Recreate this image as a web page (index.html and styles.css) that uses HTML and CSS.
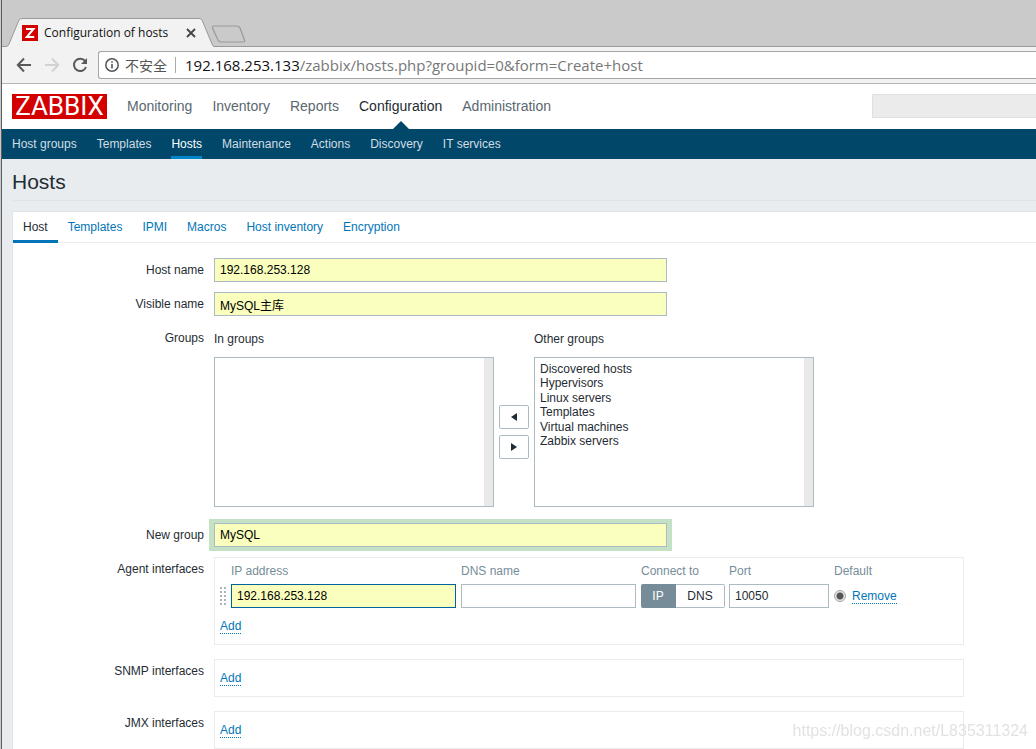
FILE: index.html
```html
<!DOCTYPE html>
<html lang="en">
<head>
<meta charset="utf-8">
<title>Configuration of hosts</title>
<link rel="stylesheet" href="styles.css">
</head>
<body>
<div class="window">
  <div class="tabstrip">
    <div class="tab">
      <svg class="tab-shape" viewBox="0 0 212 29" width="212" height="29" aria-hidden="true"><path d="M0 28.5 H4 Q6 28.5 7 26 L17 2 Q18 .5 20 .5 H197 Q199 .5 200 2 L210 26 Q211 28.5 212 28.5 V29 H0Z" fill="#f2f2f2"/><path d="M0 28.5 H4 Q6 28.5 7 26 L17 2 Q18 .5 20 .5 H197 Q199 .5 200 2 L210 26 Q211 28.5 212 28.5" fill="none" stroke="#999"/></svg>
      <span class="favicon"><svg viewBox="0 0 16 16" width="16" height="16" aria-hidden="true"><path d="M4 4h7.500L4.800 12H12.200" fill="none" stroke="#fff" stroke-width="2"/></svg></span>
      <span class="tab-title">Configuration of hosts</span>
      <button class="tab-close" aria-label="Close tab"><svg viewBox="0 0 10 10" width="10" height="10"><path d="M1 1l8 8M9 1L1 9" stroke="#444" stroke-width="1.8"/></svg></button>
    </div>
    <button class="new-tab" aria-label="New tab"><svg viewBox="0 0 36 18" width="36" height="18"><path d="M3 1H26Q28 1 29 3L33.500 15Q34 17 32.500 17H10Q8 17 7 15L1.500 3Q1 1 3 1Z" fill="#cacaca" stroke="#999" stroke-width="1.200"/></svg></button>
  </div>
  <div class="toolbar">
    <button class="tool" aria-label="Back"><svg viewBox="0 0 16 16" width="16" height="16"><path d="M15 8H2M8 1.500L1.800 8L8 14.500" fill="none" stroke="#5a5a5a" stroke-width="2"/></svg></button>
    <button class="tool" aria-label="Forward"><svg viewBox="0 0 16 16" width="16" height="16"><path d="M1 8H14M8 1.500L14.200 8L8 14.500" fill="none" stroke="#d2d2d2" stroke-width="2"/></svg></button>
    <button class="tool" aria-label="Reload"><svg viewBox="0 0 16 16" width="16" height="16"><path d="M13.200 4.200A6.200 6.200 0 1 0 14 10" fill="none" stroke="#5a5a5a" stroke-width="2"/><path d="M15 1V7H9Z" fill="#5a5a5a"/></svg></button>
    <div class="omnibox">
      <svg viewBox="0 0 14 14" width="14" height="14" aria-hidden="true"><circle cx="7" cy="7" r="6.200" fill="none" stroke="#555" stroke-width="1.500"/><path d="M7 6v4.500M7 3.200v1.600" stroke="#555" stroke-width="1.600"/></svg>
      <span class="insecure">不安全</span>
      <span class="url"><b>192.168.253.133</b>/zabbix/hosts.php?groupid=0&amp;form=Create+host</span>
    </div>
  </div>

  <header class="header">
    <a class="logo" href="#">ZABBIX</a>
    <nav class="main-nav">
      <a href="#">Monitoring</a>
      <a href="#">Inventory</a>
      <a href="#">Reports</a>
      <a href="#" class="active">Configuration</a>
      <a href="#">Administration</a>
    </nav>
    <input class="search" type="text" aria-label="Search">
  </header>
  <nav class="sub-nav">
    <a href="#">Host groups</a>
    <a href="#">Templates</a>
    <a href="#" class="active">Hosts</a>
    <a href="#">Maintenance</a>
    <a href="#">Actions</a>
    <a href="#">Discovery</a>
    <a href="#">IT services</a>
  </nav>

  <main class="content">
    <h1>Hosts</h1>
    <section class="panel">
      <nav class="tabs">
        <a href="#" class="active">Host</a>
        <a href="#">Templates</a>
        <a href="#">IPMI</a>
        <a href="#">Macros</a>
        <a href="#">Host inventory</a>
        <a href="#">Encryption</a>
      </nav>
      <form class="form">
        <label for="host">Host name</label>
        <input class="field filled" id="host" type="text" value="192.168.253.128">

        <label for="visible">Visible name</label>
        <input class="field filled" id="visible" type="text" value="MySQL主库">

        <span class="label">Groups</span>
        <div class="groups">
          <div class="group-list">
            <label for="in-groups">In groups</label>
            <select id="in-groups" multiple></select>
          </div>
          <div class="movers">
            <button type="button" aria-label="Add to groups"><svg viewBox="0 0 6 8" width="6" height="8"><path d="M6 0V8L0 4Z" fill="#1f2c33"/></svg></button>
            <button type="button" aria-label="Remove from groups"><svg viewBox="0 0 6 8" width="6" height="8"><path d="M0 0V8L6 4Z" fill="#1f2c33"/></svg></button>
          </div>
          <div class="group-list">
            <label for="other-groups">Other groups</label>
            <select id="other-groups" multiple>
              <option>Discovered hosts</option>
              <option>Hypervisors</option>
              <option>Linux servers</option>
              <option>Templates</option>
              <option>Virtual machines</option>
              <option>Zabbix servers</option>
            </select>
          </div>
        </div>

        <label for="new-group">New group</label>
        <input class="field filled highlighted" id="new-group" type="text" value="MySQL">

        <span class="label">Agent interfaces</span>
        <div class="interfaces">
          <table>
            <thead>
              <tr><th class="grip"></th><th class="ip">IP address</th><th class="dns">DNS name</th><th class="connect">Connect to</th><th class="port">Port</th><th>Default</th></tr>
            </thead>
            <tbody>
              <tr>
                <td><svg class="handle" viewBox="0 0 6 18" width="6" height="18" aria-hidden="true"><path d="M1 0V18M5 0V18" stroke="#aab4ba" stroke-width="2" stroke-dasharray="2 2"/></svg></td>
                <td><input class="field filled changed" type="text" aria-label="IP address" value="192.168.253.128"></td>
                <td><input class="field" type="text" aria-label="DNS name"></td>
                <td>
                  <div class="switch">
                    <label class="on"><input type="radio" name="useip" checked>IP</label>
                    <label><input type="radio" name="useip">DNS</label>
                  </div>
                </td>
                <td><input class="field" type="text" aria-label="Port" value="10050"></td>
                <td><div class="default"><input type="radio" aria-label="Default" checked><button type="button" class="link">Remove</button></div></td>
              </tr>
            </tbody>
          </table>
          <div class="add"><button type="button" class="link">Add</button></div>
        </div>

        <span class="label">SNMP interfaces</span>
        <div class="interfaces"><div class="add"><button type="button" class="link">Add</button></div></div>

        <span class="label">JMX interfaces</span>
        <div class="interfaces"><div class="add"><button type="button" class="link">Add</button></div></div>
      </form>
    </section>
  </main>
</div>
<div class="watermark">https://blog.csdn.net/L835311324</div>
</body>
</html>
```
FILE: styles.css
```css
* { box-sizing: border-box; }

body {
  margin: 0;
  border-left: 1px solid #cbcbcb;
  background: #e8ecef;
  color: #1f2c33;
  font: 12px/14px "Liberation Sans", "Noto Sans CJK SC", sans-serif;
}

a { color: inherit; text-decoration: none; }

button, input, select { margin: 0; font: inherit; color: inherit; }

.window {
  display: flex;
  flex-direction: column;
  min-height: 100vh;
  border-left: 1px solid #5b5e61;
}

/* Browser frame */
.tabstrip {
  display: flex;
  align-items: flex-end;
  height: 47px;
  padding-left: 5px;
  background: linear-gradient(#999, #999) bottom / 100% 1px no-repeat #cacaca;
}

.tab {
  position: relative;
  display: flex;
  align-items: center;
  width: 204px;
  height: 29px;
  padding: 0 15px;
}

.tab-shape { position: absolute; left: -5px; top: 0; }

.favicon {
  position: relative;
  display: flex;
  background: #d40000;
}

.tab-title {
  position: relative;
  flex: 1;
  margin-left: 6px;
  color: #111;
  font: 12px/16px "Open Sans", sans-serif;
  white-space: nowrap;
}

.tab-close, .new-tab, .tool {
  position: relative;
  display: flex;
  padding: 0;
  border: 0;
  background: none;
}

.new-tab { margin-bottom: 4px; }

.toolbar {
  display: flex;
  align-items: center;
  gap: 12px;
  height: 37px;
  padding: 4px 0 4px 14px;
  border-bottom: 1px solid #b5b5b5;
  background: #f2f2f2;
}

.omnibox {
  display: flex;
  flex: 1;
  align-items: center;
  gap: 6px;
  height: 28px;
  margin-left: -2px;
  padding-left: 6px;
  border: 1px solid #a5a5a5;
  border-right: 0;
  border-radius: 3px 0 0 3px;
  background: #fff;
}

.insecure {
  padding-right: 8px;
  border-right: 1px solid #aaa;
  color: #555;
  font: 14px/16px "Noto Sans CJK SC", sans-serif;
}

.url {
  margin-left: 3px;
  color: #777;
  font: 15px/20px "Open Sans", sans-serif;
  white-space: nowrap;
}

.url b { color: #111; font-weight: 400; }

/* Zabbix header */
.header {
  display: flex;
  align-items: center;
  height: 45px;
  padding-left: 10px;
  background: #fff;
}

.logo {
  width: 95px;
  background: #d40000;
  color: #fff;
  font-family: Roboto, sans-serif;
  font-size: 26px;
  line-height: 25px;
  text-align: center;
}

.main-nav {
  display: flex;
  gap: 20px;
  align-self: stretch;
  margin-left: 20px;
  color: #59676f;
  font-size: 14px;
  line-height: 44px;
}

.main-nav a { position: relative; }

.main-nav .active { color: #1f2c33; }

.main-nav .active::after {
  content: "";
  position: absolute;
  bottom: 0;
  left: 50%;
  margin-left: -8px;
  border: 8px solid transparent;
  border-top: 0;
  border-bottom-color: #00476a;
}

.search {
  align-self: flex-start;
  width: 164px;
  height: 24px;
  margin: 10px 0 0 auto;
  border: 1px solid #dfdfdf;
  border-right: 0;
  background: #ebebeb;
}

.sub-nav {
  display: flex;
  gap: 20px;
  height: 30px;
  padding-left: 10px;
  background: #00476a;
  color: #d3dde2;
  line-height: 30px;
}

.sub-nav .active {
  border-bottom: 3px solid #0086c9;
  color: #fff;
}

/* Page */
.content {
  display: flex;
  flex: 1;
  flex-direction: column;
  padding-left: 10px;
}

h1 {
  margin: 0 0 10px;
  padding: 11px 0 6px;
  border-bottom: 1px solid #dfe4e7;
  font-size: 21px;
  font-weight: 400;
  line-height: 24px;
}

.panel {
  flex: 1;
  border: solid #dfe4e7;
  border-width: 1px 0 0 1px;
  background: #fff;
}

.tabs {
  display: flex;
  height: 31px;
  border-bottom: 1px solid #ebebeb;
  color: #0275b8;
  line-height: 30px;
}

.tabs a { height: 31px; padding: 0 10px; }

.tabs .active {
  border-bottom: 3px solid #0275b8;
  color: #1f2c33;
}

.form {
  display: grid;
  grid-template-columns: 191px minmax(0, 750px);
  gap: 10px;
  padding-top: 15px;
}

.form > label, .label {
  line-height: 24px;
  text-align: right;
}

.field {
  display: block;
  width: 100%;
  height: 24px;
  padding: 0 5px;
  border: 1px solid #acbbc2;
  background: #fff;
}

.form > .field { max-width: 453px; }

.filled { background: #faffbd; color: #000; }

.changed { border-color: #00659c; }

.highlighted { box-shadow: -1px 0 0 4px #c5e1c5, 1px 0 0 4px #c5e1c5; }

.groups {
  display: flex;
  gap: 5px;
  margin-bottom: 6px;
}

.group-list { width: 280px; }

.group-list label {
  display: block;
  margin-bottom: 5px;
  line-height: 26px;
}

.group-list select {
  display: block;
  width: 100%;
  height: 150px;
  padding: 4px 0 0 3px;
  border: 1px solid #acbbc2;
  border-radius: 0;
  background: linear-gradient(#e9e9e9, #e9e9e9) right / 9px 100% no-repeat #fff;
}

.group-list option { padding: 0 2px; }

.movers {
  display: flex;
  flex-direction: column;
  justify-content: center;
  gap: 6px;
  padding-top: 31px;
}

.movers button {
  display: flex;
  align-items: center;
  justify-content: center;
  width: 30px;
  height: 24px;
  padding: 0;
  border: 1px solid #acbbc2;
  border-radius: 2px;
  background: #fff;
}

.interfaces {
  margin-bottom: 4px;
  padding-left: 5px;
  border: 1px solid #ebebeb;
}

.interfaces table {
  width: 100%;
  border-collapse: collapse;
  table-layout: fixed;
}

.interfaces th {
  height: 26px;
  padding: 0;
  color: #768d99;
  font-weight: 400;
  text-align: left;
}

.interfaces td { padding: 0 5px 0 0; }

.grip { width: 11px; }
.ip { width: 230px; }
.dns { width: 180px; }
.connect { width: 88px; }
.port { width: 105px; }

.handle { display: block; }

.switch {
  display: flex;
  width: 84px;
  line-height: 24px;
  text-align: center;
}

.switch label {
  flex: 1;
  height: 24px;
  border: 1px solid #acbbc2;
  border-left: 0;
  border-radius: 0 2px 2px 0;
  line-height: 22px;
}

.switch .on {
  flex: 0 0 35px;
  border-color: #768d99;
  border-radius: 2px 0 0 2px;
  background: #768d99;
  color: #fff;
}

.switch input { position: absolute; opacity: 0; }

.default {
  display: flex;
  align-items: center;
  gap: 6px;
}

.default input {
  appearance: none;
  width: 12px;
  height: 12px;
  border: 1px solid #aaa;
  border-radius: 50%;
  background: radial-gradient(#555 0 3px, #e4e4e4 4px);
}

.link {
  padding: 0;
  border: 0;
  border-bottom: 1px dotted #0275b8;
  background: none;
  color: #0275b8;
}

.add {
  display: flex;
  align-items: center;
  height: 36px;
}

.watermark {
  position: fixed;
  right: 8px;
  bottom: 8px;
  color: #e2e2e2;
  font-size: 16px;
  line-height: 20px;
}
```
